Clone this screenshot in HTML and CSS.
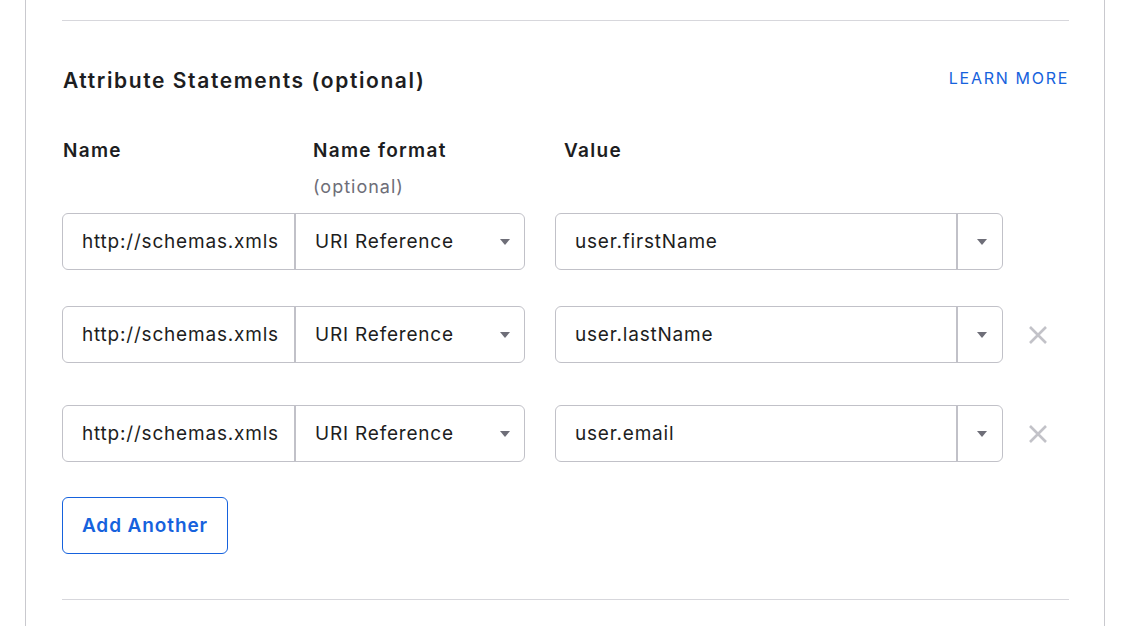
FILE: index.html
```html
<!DOCTYPE html>
<html lang="en">
<head>
    <meta charset="UTF-8">
    <title>Attribute Statements</title>
    <link rel="stylesheet" href="styles.css">
</head>
<body>
    <div class="card">
        <hr class="divider">

        <div class="section-head">
            <h2>Attribute Statements (optional)</h2>
            <a href="#" class="learn-more">LEARN MORE</a>
        </div>

        <div class="col-heads">
            <div class="col-name">Name</div>
            <div class="col-format">Name format<span class="hint">(optional)</span></div>
            <div class="col-value">Value</div>
        </div>

        <div class="rows">
            <div class="row">
                <div class="pair">
                    <input class="name-input" type="text" value="http://schemas.xmlsoap.org/ws/2005/05/identity/claims/givenname">
                    <div class="select"><span>URI Reference</span><i class="caret"></i></div>
                </div>
                <div class="value-box">
                    <span class="value-text">user.firstName</span>
                    <span class="value-toggle"><i class="caret"></i></span>
                </div>
                <div class="remove"></div>
            </div>

            <div class="row">
                <div class="pair">
                    <input class="name-input" type="text" value="http://schemas.xmlsoap.org/ws/2005/05/identity/claims/surname">
                    <div class="select"><span>URI Reference</span><i class="caret"></i></div>
                </div>
                <div class="value-box">
                    <span class="value-text">user.lastName</span>
                    <span class="value-toggle"><i class="caret"></i></span>
                </div>
                <div class="remove">
                    <svg width="20" height="20" viewBox="0 0 20 20"><path d="M2 2 L18 18 M18 2 L2 18" stroke="#c2c2c8" stroke-width="2.6" fill="none"/></svg>
                </div>
            </div>

            <div class="row row-last">
                <div class="pair">
                    <input class="name-input" type="text" value="http://schemas.xmlsoap.org/ws/2005/05/identity/claims/emailaddress">
                    <div class="select"><span>URI Reference</span><i class="caret"></i></div>
                </div>
                <div class="value-box">
                    <span class="value-text">user.email</span>
                    <span class="value-toggle"><i class="caret"></i></span>
                </div>
                <div class="remove">
                    <svg width="20" height="20" viewBox="0 0 20 20"><path d="M2 2 L18 18 M18 2 L2 18" stroke="#c2c2c8" stroke-width="2.6" fill="none"/></svg>
                </div>
            </div>
        </div>

        <button type="button" class="add-btn">Add Another</button>

        <hr class="divider divider-bottom">
    </div>
</body>
</html>
```

FILE: styles.css
```css
body {
    margin: 0;
    background-color: #fff;
    font-family: Inter, "Noto Sans", sans-serif;
    color: #1d1d21;
}
.card {
    margin-left: 25px;
    width: 1080px;
    box-sizing: border-box;
    border: 1px solid #c9c9ce;
    border-top: none;
    padding: 20px 35px 40px 36px;
}
.divider {
    border: none;
    border-top: 1px solid #d7d7dc;
    margin: 0;
}
.section-head {
    display: flex;
    justify-content: space-between;
    align-items: flex-start;
    margin-top: 46px;
}
h2 {
    margin: 0;
    font-size: 21px;
    font-weight: 600;
    line-height: 28px;
    letter-spacing: 1.6px;
    padding-left: 1px;
}
.learn-more {
    color: #1662dd;
    text-decoration: none;
    font-size: 16px;
    line-height: 20px;
    letter-spacing: 1.7px;
    margin-top: 1px;
}
.col-heads {
    display: flex;
    margin-top: 44px;
    font-size: 19px;
    font-weight: 600;
    line-height: 24px;
    letter-spacing: 1.3px;
}
.col-name {
    width: 251px;
    padding-left: 1px;
    box-sizing: border-box;
}
.col-format {
    width: 251px;
}
.hint {
    display: block;
    margin-top: 12px;
    font-weight: 400;
    font-size: 18px;
    letter-spacing: 1px;
    color: #6e6e78;
}
.rows {
    margin-top: 14px;
}
.row {
    display: flex;
    align-items: center;
    margin-bottom: 36px;
}
.row-last {
    margin-top: 42px;
    margin-bottom: 35px;
}
.pair {
    display: flex;
    flex-shrink: 0;
    width: 463px;
    height: 57px;
    box-sizing: border-box;
    border: 1px solid #c1c1c8;
    border-radius: 6px;
    margin-right: 30px;
}
.name-input {
    width: 233px;
    box-sizing: border-box;
    border: none;
    border-right: 2px solid #c1c1c8;
    border-radius: 6px 0 0 6px;
    padding: 0 16px 0 19px;
    font-family: inherit;
    font-size: 19px;
    letter-spacing: 0.8px;
    color: #1d1d21;
    outline: none;
    background: transparent;
}
.select {
    flex: 1;
    display: flex;
    align-items: center;
    justify-content: space-between;
    padding: 0 14px 0 19px;
    font-size: 19px;
    letter-spacing: 0.8px;
}
.caret {
    display: block;
    width: 0;
    height: 0;
    border-left: 5px solid transparent;
    border-right: 5px solid transparent;
    border-top: 6px solid #6e6e78;
}
.value-box {
    display: flex;
    flex-shrink: 0;
    width: 448px;
    height: 57px;
    box-sizing: border-box;
    border: 1px solid #c1c1c8;
    border-radius: 6px;
}
.value-text {
    flex: 1;
    display: flex;
    align-items: center;
    padding-left: 19px;
    font-size: 19px;
    letter-spacing: 0.8px;
    border-right: 2px solid #c1c1c8;
}
.value-toggle {
    width: 44px;
    display: flex;
    align-items: center;
    justify-content: center;
    padding-left: 4px;
    box-sizing: border-box;
}
.remove {
    width: 70px;
    flex-shrink: 0;
    display: flex;
    justify-content: center;
}
.add-btn {
    display: block;
    width: 166px;
    height: 57px;
    background: #fff;
    border: 1px solid #1662dd;
    border-radius: 6px;
    color: #1662dd;
    font-family: inherit;
    font-size: 19px;
    font-weight: 600;
    letter-spacing: 0.9px;
    cursor: pointer;
    margin-bottom: 45px;
}
.add-btn:hover {
    background-color: #f2f6fe;
}
```
